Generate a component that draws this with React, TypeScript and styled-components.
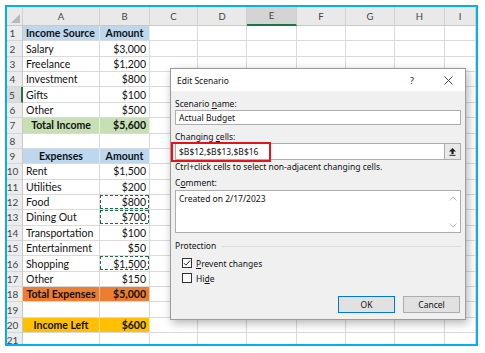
import React from 'react';
import styled, { createGlobalStyle, css } from 'styled-components';

const GlobalStyle = createGlobalStyle`
  html, body {
    margin: 0;
    padding: 0;
    background: #fff;
  }
`;

type Align = 'left' | 'center' | 'right';

interface Row {
    a: string;
    b: string;
    fill?: string;
    bold?: boolean;
    aAlign?: Align;
    bAlign?: Align;
    dashed?: boolean;
}

const BLUE = '#bdd7ee';
const ANTS = '#1f6e40';

const rows: Row[] = [
    { a: 'Income Source', b: 'Amount', fill: BLUE, bold: true, aAlign: 'left', bAlign: 'center' },
    { a: 'Salary', b: '$3,000' },
    { a: 'Freelance', b: '$1,200' },
    { a: 'Investment', b: '$800' },
    { a: 'Gifts', b: '$100' },
    { a: 'Other', b: '$500' },
    { a: 'Total Income', b: '$5,600', fill: '#c6e0b4', bold: true, aAlign: 'center' },
    { a: '', b: '' },
    { a: 'Expenses', b: 'Amount', fill: BLUE, bold: true, aAlign: 'center', bAlign: 'center' },
    { a: 'Rent', b: '$1,500' },
    { a: 'Utilities', b: '$200' },
    { a: 'Food', b: '$800', dashed: true },
    { a: 'Dining Out', b: '$700', dashed: true },
    { a: 'Transportation', b: '$100' },
    { a: 'Entertainment', b: '$50' },
    { a: 'Shopping', b: '$1,500', dashed: true },
    { a: 'Other', b: '$150' },
    { a: 'Total Expenses', b: '$5,000', fill: '#ed7d31', bold: true, aAlign: 'center' },
    { a: '', b: '' },
    { a: 'Income Left', b: '$600', fill: '#ffc000', bold: true, aAlign: 'center' },
    { a: '', b: '' }
];

const columns = ['A', 'B', 'C', 'D', 'E', 'F', 'G', 'H', 'I'];
const ACTIVE_COL = 'E';
const ACTIVE_ROW = 5;

const Page = styled.div`
    width: 485px;
    height: 353px;
    padding: 5px;
    box-sizing: border-box;
    background: #fff;
`;

const Frame = styled.div`
    position: relative;
    width: 473px;
    height: 341px;
    border: 2px solid #00b0f0;
    box-sizing: border-box;
    overflow: hidden;
    background: #fff;
`;

const Sheet = styled.div`
    display: grid;
    grid-template-columns: 16px 77px 50px 48px 49px 50px 49px 49px 50px 31px;
    grid-template-rows: 19px repeat(21, 15.37px);
    font-family: Lato, 'Liberation Sans', sans-serif;
    font-size: 10.5px;
    color: #111;
`;

const Corner = styled.div`
    background: #e9e9e9;
    border-right: 1px solid #cfcfcf;
    border-bottom: 1px solid #c8c8c8;
    box-sizing: border-box;
    display: flex;
    align-items: flex-end;
    justify-content: flex-end;
    padding: 0 2px 2px 0;
`;

const ColHead = styled.div<{ $active?: boolean }>`
    background: ${p => (p.$active ? '#d4d4d4' : '#e9e9e9')};
    border-right: 1px solid #d0d0d0;
    border-bottom: ${p => (p.$active ? '2px solid #217346' : '1px solid #c8c8c8')};
    box-sizing: border-box;
    color: #444;
    font-size: 9.5px;
    display: flex;
    align-items: center;
    justify-content: center;
`;

const RowHead = styled.div<{ $active?: boolean }>`
    background: ${p => (p.$active ? '#dcdcdc' : '#ececec')};
    border-right: ${p => (p.$active ? '2px solid #217346' : '1px solid #c8c8c8')};
    border-bottom: 1px solid #d6d6d6;
    box-sizing: border-box;
    color: #444;
    font-size: 10px;
    display: flex;
    align-items: center;
    justify-content: center;
    padding-right: 4px;
`;

const dash = (dir: string) =>
    `repeating-linear-gradient(${dir}, ${ANTS} 0 3px, transparent 3px 5px)`;

const Cell = styled.div<{ $fill?: string; $bold?: boolean; $align?: Align; $dashed?: boolean }>`
    position: relative;
    box-sizing: border-box;
    background: ${p => p.$fill || '#fff'};
    border-right: 1px solid ${p => (p.$fill ? 'rgba(255,255,255,0.55)' : '#dadada')};
    border-bottom: 1px solid #dadada;
    display: flex;
    align-items: center;
    justify-content: ${p =>
        p.$align === 'center' ? 'center' : p.$align === 'right' ? 'flex-end' : 'flex-start'};
    padding: 0 3px;
    font-weight: ${p => (p.$bold ? 700 : 400)};
    white-space: nowrap;
    overflow: hidden;

    ${p =>
        p.$dashed &&
        css`
            &::after {
                content: '';
                position: absolute;
                inset: 0;
                background:
                    ${dash('90deg')} left top / 100% 1.4px no-repeat,
                    ${dash('90deg')} left bottom / 100% 1.4px no-repeat,
                    ${dash('180deg')} left top / 1.4px 100% no-repeat,
                    ${dash('180deg')} right top / 1.4px 100% no-repeat;
            }
        `}
`;

const Dialog = styled.div`
    position: absolute;
    left: 163px;
    top: 61px;
    width: 296px;
    height: 252px;
    box-sizing: border-box;
    border: 1px solid #9b9b9b;
    background: #f0f0f0;
    box-shadow: 2px 3px 9px rgba(0, 0, 0, 0.3);
    font-family: 'Noto Sans', 'Open Sans', sans-serif;
    font-size: 8.5px;
    color: #111;
    display: flex;
    flex-direction: column;
`;

const TitleBar = styled.div`
    height: 22px;
    background: #fff;
    display: flex;
    align-items: center;
    padding-left: 6px;
`;

const Title = styled.div`
    flex: 1;
    font-size: 8.5px;
`;

const TitleButton = styled.div<{ $gap: number }>`
    width: 22px;
    height: 22px;
    margin-right: ${p => p.$gap}px;
    display: flex;
    align-items: center;
    justify-content: center;
    font-size: 9px;
    color: #222;
`;

const Body = styled.div`
    display: flex;
    flex-direction: column;
    padding: 0 4px;
`;

const Label = styled.div<{ $top: number }>`
    margin-top: ${p => p.$top}px;
    height: 10px;
    line-height: 10px;
    white-space: nowrap;
`;

const TextBox = styled.div<{ $top: number; $height: number }>`
    position: relative;
    margin-top: ${p => p.$top}px;
    height: ${p => p.$height}px;
    box-sizing: border-box;
    border: 1px solid #adadad;
    background: #fff;
    display: flex;
    align-items: center;
    padding-left: 3px;
`;

const RefButton = styled.div`
    margin-left: auto;
    width: 16px;
    height: 100%;
    box-sizing: border-box;
    border-left: 1px solid #adadad;
    background: #e8e8e8;
    display: flex;
    align-items: center;
    justify-content: center;
`;

const Highlight = styled.div`
    position: absolute;
    left: -5px;
    top: -2px;
    width: 100px;
    height: 20px;
    box-sizing: border-box;
    border: 2px solid #e3151a;
`;

const CommentBox = styled.div`
    margin-top: 2px;
    height: 43px;
    box-sizing: border-box;
    border: 1px solid #adadad;
    background: #fff;
    display: flex;
`;

const CommentText = styled.div`
    flex: 1;
    padding: 3px 0 0 3px;
    line-height: 10px;
`;

const ScrollTrack = styled.div`
    width: 14px;
    display: flex;
    flex-direction: column;
    justify-content: space-between;
    align-items: center;
    padding: 5px 0 4px;
`;

const Group = styled.div`
    margin-top: 8px;
    height: 10px;
    line-height: 10px;
    display: flex;
    align-items: center;
`;

const GroupLine = styled.div`
    flex: 1;
    margin-left: 6px;
    border-top: 1px solid #dcdcdc;
`;

const CheckRow = styled.div<{ $top: number }>`
    margin-top: ${p => p.$top}px;
    height: 10px;
    display: flex;
    align-items: center;
    gap: 4px;
    padding-left: 7px;
`;

const CheckBox = styled.div`
    width: 10px;
    height: 10px;
    box-sizing: border-box;
    border: 1px solid #333;
    background: #fff;
    display: flex;
    align-items: center;
    justify-content: center;
`;

const Buttons = styled.div`
    margin-top: 13px;
    display: flex;
    justify-content: flex-end;
    gap: 8px;
    padding-right: 1px;
`;

const Button = styled.div<{ $primary?: boolean }>`
    width: 57px;
    height: 17px;
    box-sizing: border-box;
    border: 1px solid ${p => (p.$primary ? '#0078d7' : '#adadad')};
    background: #e1e1e1;
    display: flex;
    align-items: center;
    justify-content: center;
`;

function CornerMark() {
    return (
        <svg width="9" height="9" viewBox="0 0 9 9">
            <polygon points="9,0 9,9 0,9" fill="#b8b8b8" />
        </svg>
    );
}

function CloseIcon() {
    return (
        <svg width="9" height="9" viewBox="0 0 9 9">
            <path d="M0.5 0.5 L8.5 8.5 M8.5 0.5 L0.5 8.5" stroke="#333" strokeWidth="0.9" />
        </svg>
    );
}

function CollapseIcon() {
    return (
        <svg width="9" height="9" viewBox="0 0 9 9">
            <path d="M4.5 1 L8 4.6 H5.6 V7 H3.4 V4.6 H1 Z" fill="#222" />
            <rect x="1.5" y="7.8" width="6" height="1" fill="#222" />
        </svg>
    );
}

function Chevron({ up }: { up?: boolean }) {
    return (
        <svg width="8" height="5" viewBox="0 0 8 5">
            <path
                d={up ? 'M0.5 4.5 L4 1 L7.5 4.5' : 'M0.5 0.5 L4 4 L7.5 0.5'}
                stroke="#c4c4c4"
                strokeWidth="1"
                fill="none"
            />
        </svg>
    );
}

function Tick() {
    return (
        <svg width="8" height="8" viewBox="0 0 8 8">
            <path d="M1 4.2 L3 6.2 L7 1.5" stroke="#222" strokeWidth="1" fill="none" />
        </svg>
    );
}

function renderRow(row: Row, index: number) {
    const n = index + 1;
    const cells = [
        <RowHead key={`h${n}`} $active={n === ACTIVE_ROW}>
            {n}
        </RowHead>,
        <Cell key={`a${n}`} $fill={row.fill} $bold={row.bold} $align={row.aAlign || 'left'}>
            {row.a}
        </Cell>,
        <Cell
            key={`b${n}`}
            $fill={row.fill}
            $bold={row.bold}
            $align={row.bAlign || 'right'}
            $dashed={row.dashed}
        >
            {row.b}
        </Cell>
    ];

    columns.slice(2).forEach(c => cells.push(<Cell key={`${c}${n}`} />));

    return cells;
}

export default function App() {
    return (
        <Page>
            <GlobalStyle />
            <Frame>
                <Sheet>
                    <Corner>
                        <CornerMark />
                    </Corner>
                    {columns.map(c => (
                        <ColHead key={c} $active={c === ACTIVE_COL}>
                            {c}
                        </ColHead>
                    ))}
                    {rows.map(renderRow)}
                </Sheet>

                <Dialog>
                    <TitleBar>
                        <Title>Edit Scenario</Title>
                        <TitleButton $gap={14}>?</TitleButton>
                        <TitleButton $gap={6}>
                            <CloseIcon />
                        </TitleButton>
                    </TitleBar>
                    <Body>
                        <Label $top={8}>
                            Scenario <u>n</u>ame:
                        </Label>
                        <TextBox $top={1} $height={15}>
                            Actual Budget
                        </TextBox>
                        <Label $top={7}>
                            Changing <u>c</u>ells:
                        </Label>
                        <TextBox $top={1} $height={17}>
                            $B$12,$B$13,$B$16
                            <RefButton>
                                <CollapseIcon />
                            </RefButton>
                            <Highlight />
                        </TextBox>
                        <Label $top={2}>Ctrl+click cells to select non-adjacent changing cells.</Label>
                        <Label $top={6}>
                            C<u>o</u>mment:
                        </Label>
                        <CommentBox>
                            <CommentText>Created on 2/17/2023</CommentText>
                            <ScrollTrack>
                                <Chevron up />
                                <Chevron />
                            </ScrollTrack>
                        </CommentBox>
                        <Group>
                            Protection
                            <GroupLine />
                        </Group>
                        <CheckRow $top={7}>
                            <CheckBox>
                                <Tick />
                            </CheckBox>
                            <span>
                                <u>P</u>revent changes
                            </span>
                        </CheckRow>
                        <CheckRow $top={5}>
                            <CheckBox />
                            <span>
                                Hi<u>d</u>e
                            </span>
                        </CheckRow>
                        <Buttons>
                            <Button $primary>OK</Button>
                            <Button>Cancel</Button>
                        </Buttons>
                    </Body>
                </Dialog>
            </Frame>
        </Page>
    );
}
